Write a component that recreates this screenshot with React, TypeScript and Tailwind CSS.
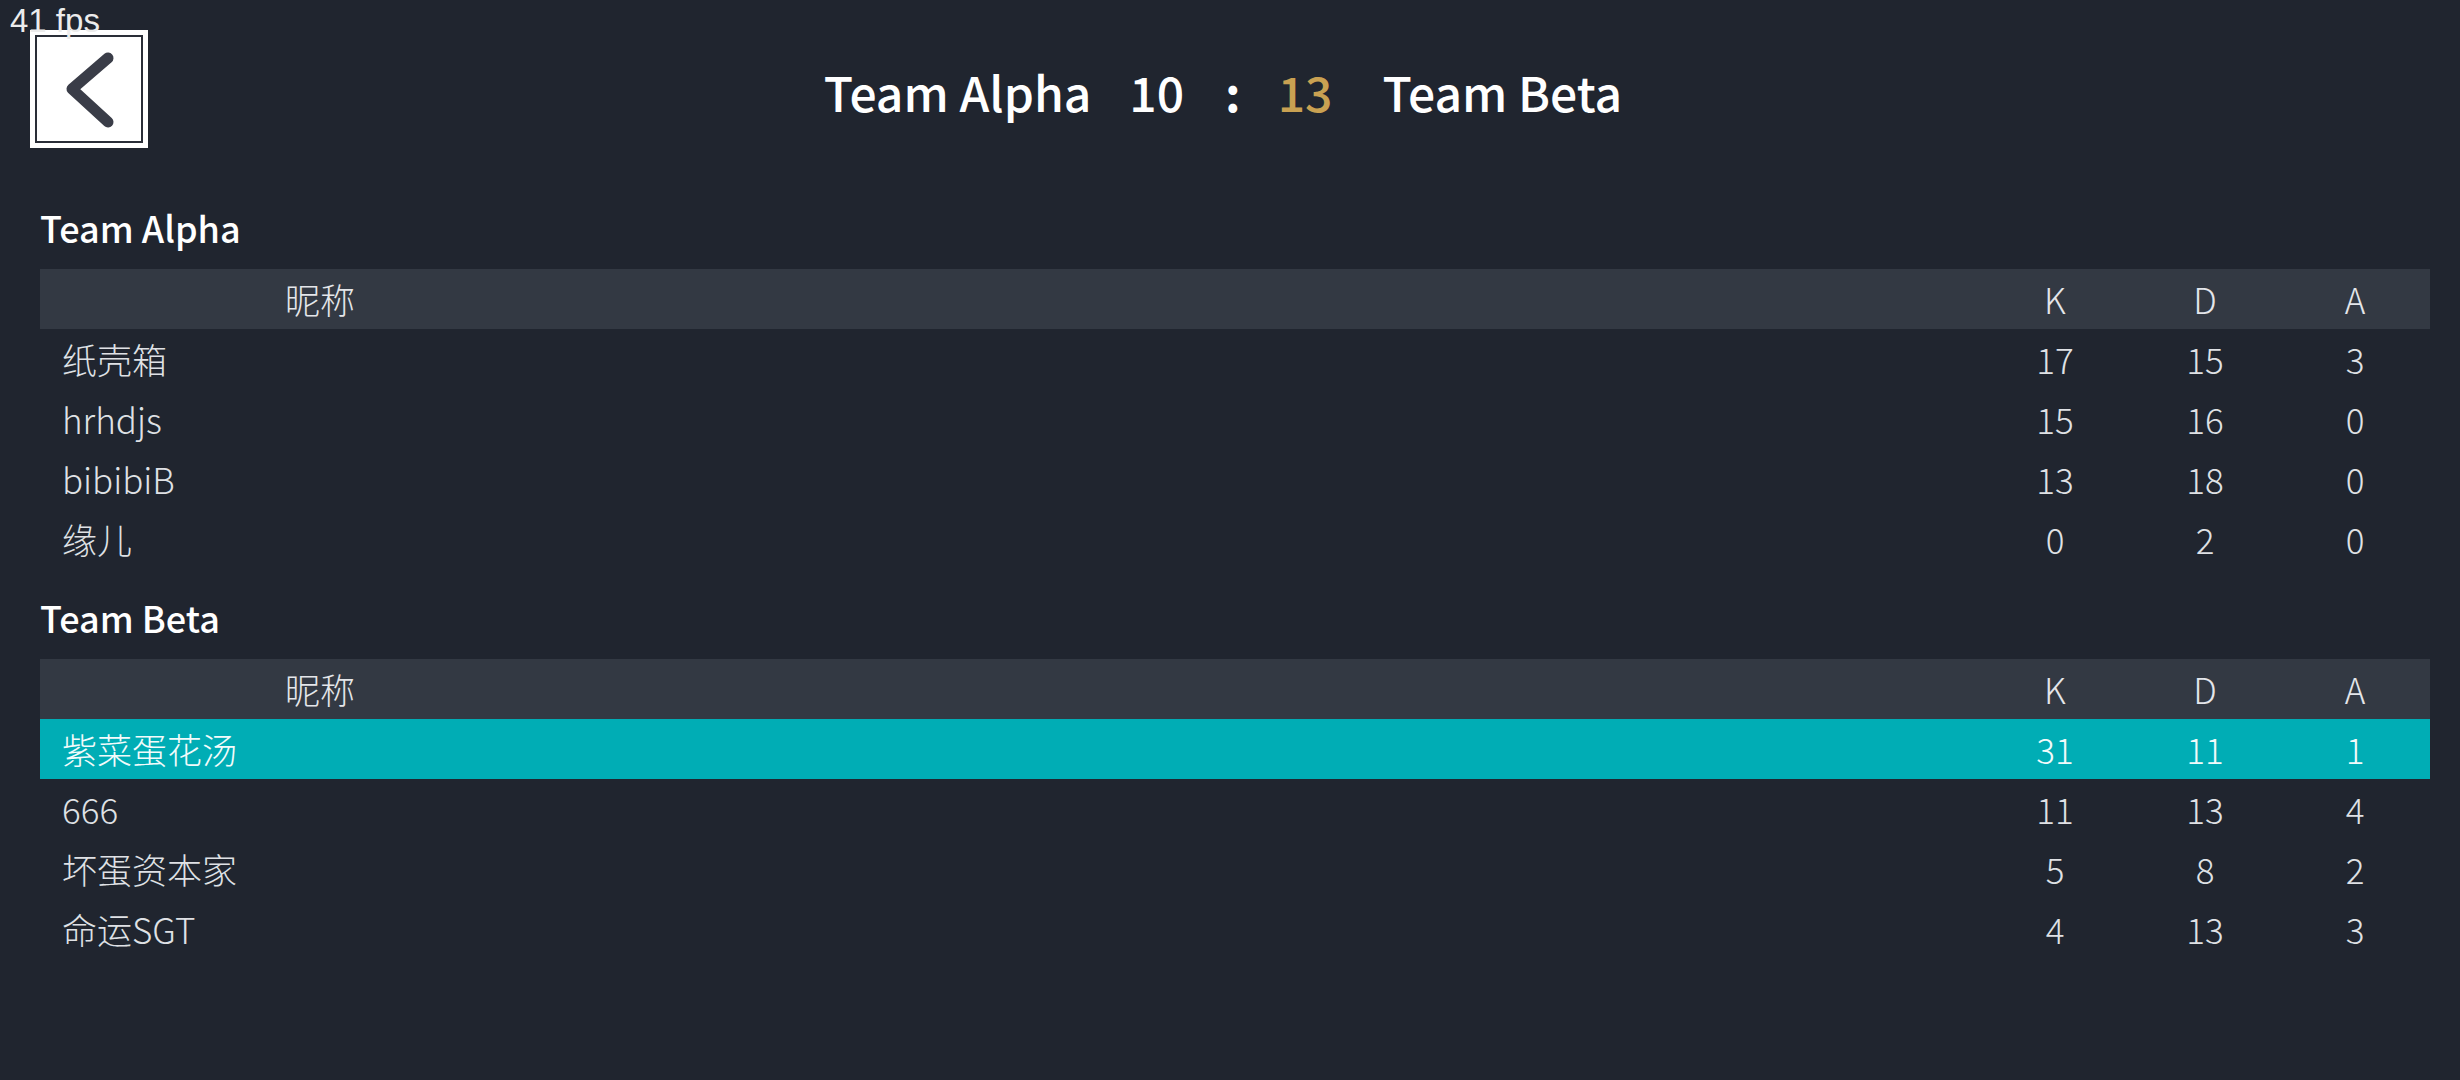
import React from 'react'

type Player = { name: string; k: number; d: number; a: number; mvp?: boolean }

const teams: { name: string; players: Player[] }[] = [
  {
    name: 'Team Alpha',
    players: [
      { name: '纸壳箱', k: 17, d: 15, a: 3 },
      { name: 'hrhdjs', k: 15, d: 16, a: 0 },
      { name: 'bibibiB', k: 13, d: 18, a: 0 },
      { name: '缘儿', k: 0, d: 2, a: 0 },
    ],
  },
  {
    name: 'Team Beta',
    players: [
      { name: '紫菜蛋花汤', k: 31, d: 11, a: 1, mvp: true },
      { name: '666', k: 11, d: 13, a: 4 },
      { name: '坏蛋资本家', k: 5, d: 8, a: 2 },
      { name: '命运SGT', k: 4, d: 13, a: 3 },
    ],
  },
]

const cols = 'grid grid-cols-[560px_1fr_150px_150px_150px] items-center h-[60px]'

function BackButton() {
  return (
    <button className="w-[118px] h-[118px] bg-white p-[5px]">
      <div className="w-full h-full border-2 border-[#2a2e38] flex items-center justify-center">
        <svg width="104" height="104" viewBox="0 0 104 104">
          <path
            d="M71 21 L35 52 L71 85"
            fill="none"
            stroke="#3a3d48"
            strokeWidth="11"
            strokeLinecap="round"
            strokeLinejoin="round"
          />
        </svg>
      </div>
    </button>
  )
}

function TeamTable({ name, players }: { name: string; players: Player[] }) {
  return (
    <section>
      <div className="h-[90px] flex items-center pt-[6px] text-[36px] font-medium text-white">{name}</div>
      <div className={`${cols} bg-[#333943] text-[#e4e6ea]`}>
        <div className="text-center">昵称</div>
        <div />
        <div className="text-center">K</div>
        <div className="text-center">D</div>
        <div className="text-center">A</div>
      </div>
      {players.map((p) => (
        <div key={p.name} className={`${cols} ${p.mvp ? 'bg-[#00adb5] text-[#f2fbfb]' : 'text-[#dfe1e5]'}`}>
          <div className="pl-[22px]">{p.name}</div>
          <div />
          <div className="text-center">{p.k}</div>
          <div className="text-center">{p.d}</div>
          <div className="text-center">{p.a}</div>
        </div>
      ))}
    </section>
  )
}

export default function App() {
  return (
    <div className="relative min-h-screen w-full bg-[#20252f] font-['Noto_Sans_CJK_SC',sans-serif] text-[35px] font-light">
      <div className="absolute left-[10px] top-[-4px] z-10 font-['Liberation_Sans',Arial,sans-serif] text-[33px] font-normal text-[#ececec]">
        41 fps
      </div>

      <header className="h-[179px] pt-[30px] pl-[30px] pr-[30px]">
        <div className="grid grid-cols-[1fr_auto_1fr] items-center">
          <div>
            <BackButton />
          </div>
          <div className="flex items-center text-[48px] font-medium text-white pr-[14px]">
            <span>Team Alpha</span>
            <span className="ml-[38px]">10</span>
            <span className="ml-[41px] font-bold">:</span>
            <span className="ml-[37px] text-[#c9a152]">13</span>
            <span className="ml-[50px]">Team Beta</span>
          </div>
          <div />
        </div>
      </header>

      <main className="pl-[40px] pr-[30px]">
        {teams.map((t) => (
          <TeamTable key={t.name} name={t.name} players={t.players} />
        ))}
      </main>
    </div>
  )
}
